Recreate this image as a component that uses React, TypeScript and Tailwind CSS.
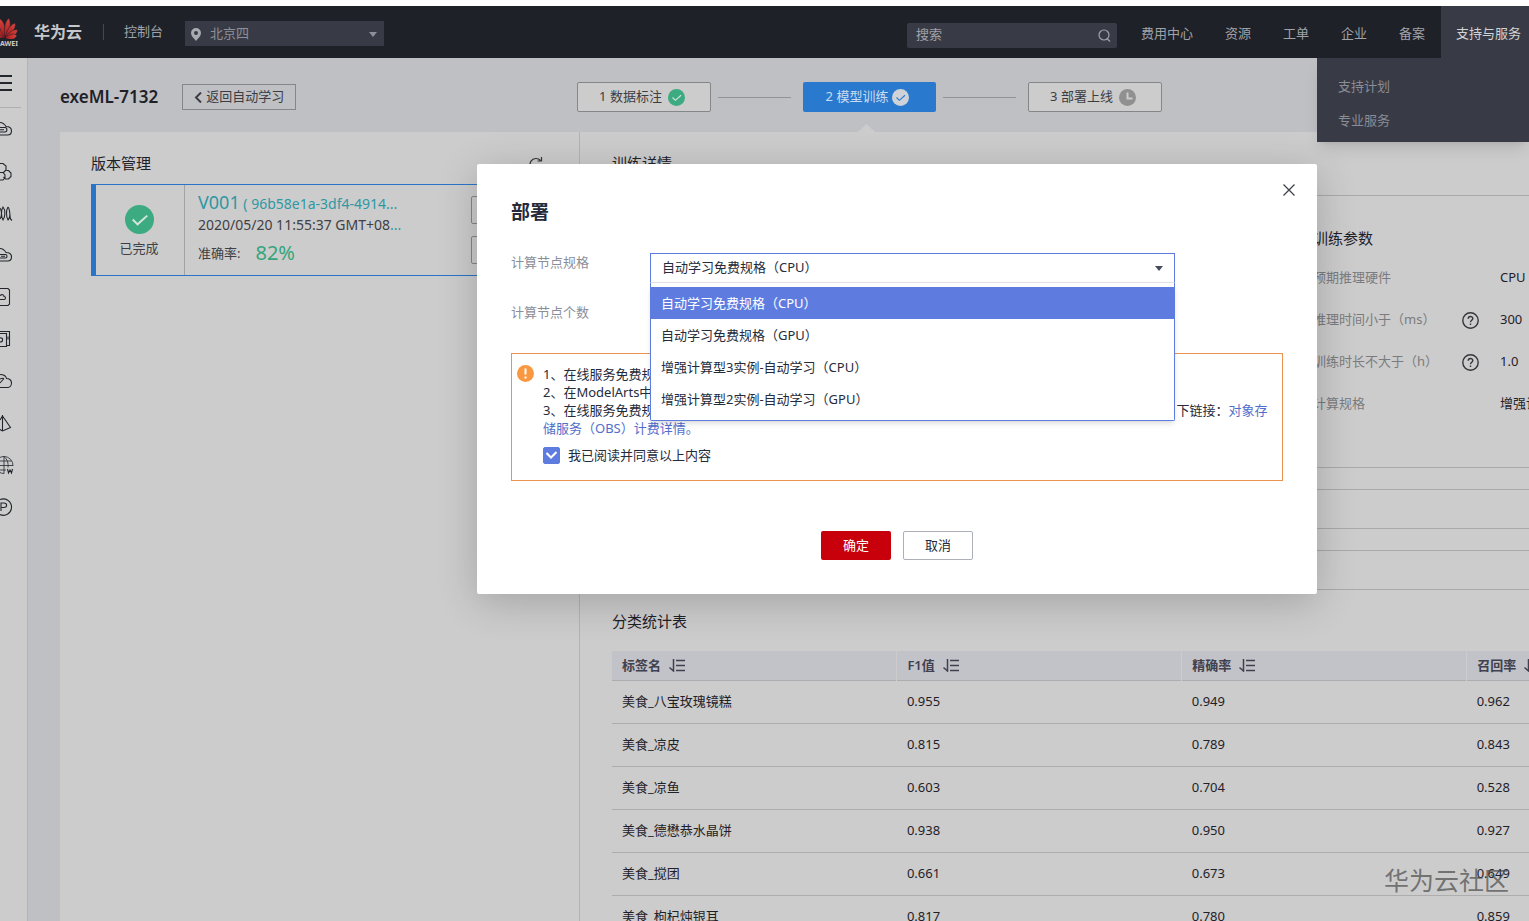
import type { ReactNode } from "react";
import { useState } from "react";

const menuItems = ["费用中心", "资源", "工单", "企业", "备案"];

const specs = [
  "自动学习免费规格（CPU）",
  "自动学习免费规格（GPU）",
  "增强计算型3实例-自动学习（CPU）",
  "增强计算型2实例-自动学习（GPU）",
];

const rows = [
  ["美食_八宝玫瑰镜糕", "0.955", "0.949", "0.962"],
  ["美食_凉皮", "0.815", "0.789", "0.843"],
  ["美食_凉鱼", "0.603", "0.704", "0.528"],
  ["美食_德懋恭水晶饼", "0.938", "0.950", "0.927"],
  ["美食_搅团", "0.661", "0.673", "0.649"],
  ["美食_枸杞炖银耳", "0.817", "0.780", "0.859"],
];

const params = [
  { label: "预期推理硬件", value: "CPU", help: false },
  { label: "推理时间小于（ms）", value: "300", help: true },
  { label: "训练时长不大于（h）", value: "1.0", help: true },
  { label: "计算规格", value: "增强计算型", help: false },
];

function Petal({ angle, length }: { angle: number; length: number }) {
  return (
    <path
      d={`M5 21 C1 ${21 - length * 0.45} 1 ${21 - length * 0.85} 4 ${21 - length} C8 ${21 - length * 0.8} 8 ${21 - length * 0.4} 5 21Z`}
      transform={`rotate(${angle} 5 21)`}
    />
  );
}

function Logo() {
  return (
    <a href="#" aria-label="HUAWEI" className="flex w-[18px] flex-col items-end overflow-hidden">
      <svg width="18" height="22" viewBox="0 0 18 22">
        <defs>
          <linearGradient id="petals" x1="0" y1="0" x2="0" y2="1">
            <stop offset="0" stopColor="#d6473f" />
            <stop offset="1" stopColor="#a3151b" />
          </linearGradient>
        </defs>
        <g fill="url(#petals)" stroke="#1e2128" strokeWidth="0.5">
          <Petal angle={-62} length={14} />
          <Petal angle={-36} length={18} />
          <Petal angle={-12} length={20} />
          <Petal angle={14} length={20} />
          <Petal angle={38} length={18} />
          <Petal angle={62} length={15} />
          <Petal angle={84} length={12} />
        </g>
      </svg>
      <span className="text-[7px] font-bold leading-[9px] text-[#c9c9c9]">HUAWEI</span>
    </a>
  );
}

function Caret({ className }: { className: string }) {
  return (
    <svg className={className} width="8" height="5" viewBox="0 0 8 5" fill="currentColor">
      <path d="M0 0h8L4 5z" />
    </svg>
  );
}

function CheckCircle({ size, fill, stroke }: { size: number; fill: string; stroke: string }) {
  return (
    <svg width={size} height={size} viewBox="0 0 30 30" fill="none" className="shrink-0">
      <circle cx="15" cy="15" r="15" fill={fill} />
      <path d="M8 15l5 5 10-9" stroke={stroke} strokeWidth="2" />
    </svg>
  );
}

function Clock() {
  return (
    <svg width="17" height="17" viewBox="0 0 17 17" fill="none" className="shrink-0">
      <circle cx="8.5" cy="8.5" r="8.5" fill="#909090" />
      <path d="M8.5 3.5v6h5" stroke="#cccccc" strokeWidth="2" />
    </svg>
  );
}

function SortIcon() {
  return (
    <svg width="16" height="13" viewBox="0 0 16 13" fill="none" stroke="currentColor" strokeWidth="1.5">
      <path d="M4.5 0v12L0.5 8.5M7 1.5h9M7 6.5h9M7 11.5h9" />
    </svg>
  );
}

function HelpIcon() {
  return (
    <svg width="17" height="17" viewBox="0 0 17 17" fill="none" stroke="#35363c" strokeWidth="1.4">
      <circle cx="8.5" cy="8.5" r="7.7" />
      <path d="M6.2 6.8c0-3 4.6-2.9 4.6-.2 0 1.7-2.3 1.7-2.3 3.6M8.5 11.4v1.5" />
    </svg>
  );
}

const railIcons: { name: string; art: ReactNode }[] = [
  {
    name: "云服务器",
    art: <path d="M0 3.500c3 0 4.500 1.500 6 4 3 0 5.500 1.500 5.500 4.500s-2 4-4 4H0M0 8.500h5c2.500 0 2.500 4.500 0 4.500H0M0 10.800h4" />,
  },
  {
    name: "弹性伸缩",
    art: <path d="M0 2.500h3l3 2.500v4l-2.500 2.500M0 11.500h3l2 2.500v2.500L3 19H0M6.500 9.500h2l2.500 2.500v3.500L8.500 18h-3L3.500 16" />,
  },
  {
    name: "云监控",
    art: <path d="M0 5c2 3 2 8 0 11M3 4c2.500 3 2.500 9 0 13-2-3-2-10 0-13zM8 4c2.500 3 1.500 9 2.500 12l1.500 1.500M8 4c-2 3-2 10 0 13 1.500-1.500 2-3 2-6" />,
  },
  {
    name: "裸金属",
    art: <path d="M0 3.500c3 0 4.500 1.500 6 4 3 0 5.500 1.500 5.500 4.500s-2 4-4 4H0M0 9.500h5.500c2 0 2 3.500 0 3.500H0M1 11.300h4" />,
  },
  {
    name: "镜像",
    art: <path d="M0 1.500h8l1.500 1.500v14L8 18.500H0M0 8.500c3-2 4 0 4 1 2 0 2 3 0 3H0" />,
  },
  {
    name: "云硬盘",
    art: <path d="M0 2.500h9.500v14h-3M0 4.500h6.500v13H0M0 9c3.500-1 3.500 4 0 4M8 7.500v3" />,
  },
  {
    name: "对象存储",
    art: <path d="M0 3.500c4 0 6 1.500 6.500 4 3 0 5 1.800 5 4.500s-2 4.500-4 4.500H0M0 8c2-1 3-1 4-.5M0 12l4-4.500" />,
  },
  {
    name: "弹性公网",
    art: <path d="M2.500 2v16M2.500 3l8 11.500-8 3.500L0 16.500M2.500 3 0 7M1 4.500h3" />,
  },
  {
    name: "域名",
    art: (
      <>
        <path
          d="M4 1.500a9 9 0 0 1 9 9.500M4 1.500v17M0 6h11.500M0 10.500h13M0 15h6M4 18.500c-1.500 0-3-.3-4-1M4 1.500c-1.500 0-3 .3-4 1M4 1.500c3.500 3 4.500 7 4 11"
          strokeWidth="0.8"
        />
        <path d="M7.500 14l1 4 1.500-3 1.500 3 1-4" />
      </>
    ),
  },
  {
    name: "备案管理",
    art: <path d="M0 2.600a8.200 8.200 0 1 1 0 15M1 14V6h3c3.500 0 3.500 4.500 0 4.500H1" />,
  },
];

function SideRail() {
  return (
    <nav className="w-7 shrink-0 border-r border-[#b3b4b7] bg-[#cccccc] text-[#24262d]">
      <div className="mr-1.5 flex h-[50px] items-center border-b border-[#b0b0b0]">
        <button type="button" aria-label="菜单">
          <svg width="12" height="18" viewBox="0 0 12 18" stroke="currentColor" strokeWidth="2">
            <path d="M0 2h12M0 9h12M0 16h12" />
          </svg>
        </button>
      </div>
      {railIcons.map((icon) => (
        <a key={icon.name} href="#" aria-label={icon.name} className="flex h-[42px] items-center">
          <svg width="14" height="20" viewBox="0 0 14 20" fill="none" stroke="currentColor" strokeWidth="1.1">
            {icon.art}
          </svg>
        </a>
      ))}
    </nav>
  );
}

function TopBar() {
  return (
    <header className="relative flex h-[52px] items-center bg-[#1e2128] text-[13px] text-[#a0a2a8]">
      <Logo />
      <span className="ml-4 text-base font-bold text-[#c6c7ca]">华为云</span>
      <span className="ml-[21px] h-4 w-px bg-[#444750]" />
      <a href="#" className="ml-5">控制台</a>
      <div className="relative ml-[22px] mt-[3px] text-[#8e9099]">
        <svg className="pointer-events-none absolute left-1.5 top-[7px]" width="10" height="13" viewBox="0 0 10 13" fill="#a9abb2">
          <path fillRule="evenodd" d="M5 0a5 5 0 0 1 5 5c0 3-3 5.500-5 8C3 10.500 0 8 0 5a5 5 0 0 1 5-5zm0 3a2 2 0 1 0 0 4 2 2 0 0 0 0-4z" />
        </svg>
        <select aria-label="区域" className="block h-[25px] w-[199px] appearance-none bg-[#383b45] pl-[25px]">
          <option>北京四</option>
        </select>
        <Caret className="pointer-events-none absolute right-[7px] top-[11px]" />
      </div>
      <div className="ml-auto mt-1.5 flex h-[25px] w-[210px] items-center rounded-xs bg-[#383b45] pl-[9px] pr-1.5">
        <input
          type="search"
          aria-label="搜索"
          placeholder="搜索"
          className="min-w-0 flex-1 bg-transparent placeholder:text-[#a0a2a8]"
        />
        <svg width="13" height="13" viewBox="0 0 13 13" fill="none" stroke="currentColor" strokeWidth="1.2">
          <circle cx="6" cy="6" r="5" />
          <path d="M9 9.500l3 3" />
        </svg>
      </div>
      <nav className="flex h-full pl-2 text-center">
        {menuItems.map((item) => (
          <a key={item} href="#" className="flex h-full items-center px-4 pt-1">
            {item}
          </a>
        ))}
        <a href="#" className="flex h-full items-center bg-[#383b45] pl-[15px] pr-2 pt-1 text-[#d2d3d6]">
          支持与服务
        </a>
      </nav>
      <div className="absolute right-0 top-full z-10 flex w-[212px] flex-col bg-[#383b45] pb-[5px] pl-[21px] pt-[11px] text-[#8a8c96] shadow-lg">
        <a href="#" className="leading-[34px]">支持计划</a>
        <a href="#" className="leading-[34px]">专业服务</a>
      </div>
    </header>
  );
}

function Steps() {
  return (
    <ol className="flex items-center text-[13px] text-[#3c3d42]">
      <li className="flex h-[30px] w-[134px] items-center justify-center gap-1.5 rounded-xs border border-[#85868a] bg-[#cccccc] pr-1">
        1 数据标注
        <CheckCircle size={17} fill="#3dab82" stroke="#d6e6df" />
      </li>
      <li aria-hidden className="ml-[7px] mr-3 h-px w-[73px] bg-[#929397]" />
      <li className="relative flex h-[30px] w-[133px] items-center justify-center gap-1 rounded-xs bg-[#2979cf] pr-1 text-[#c9dcf0]">
        2 模型训练
        <CheckCircle size={17} fill="#cfd3d8" stroke="#2979cf" />
        <svg className="absolute left-1/2 top-[42px] -ml-3" width="17" height="8" viewBox="0 0 17 8">
          <path d="M0 8L8.500 0 17 8z" fill="#cccccc" />
        </svg>
      </li>
      <li aria-hidden className="ml-[7px] mr-3 h-px w-[73px] bg-[#929397]" />
      <li className="flex h-[30px] w-[134px] items-center justify-center gap-1.5 rounded-xs border border-[#85868a] bg-[#cccccc] pr-1">
        3 部署上线
        <Clock />
      </li>
    </ol>
  );
}

function Versions() {
  return (
    <section className="w-[520px] shrink-0 border-r border-[#b3b3b3] px-[31px]">
      <div className="flex h-[52px] items-end justify-between pb-2 pr-[5px]">
        <h2 className="text-[15px] leading-[26px] text-[#1f2129]">版本管理</h2>
        <button type="button" aria-label="刷新" className="mb-[5px]">
          <svg width="14" height="14" viewBox="0 0 14 14" fill="none" stroke="#35363c" strokeWidth="1.2">
            <path d="M11.500 3.500A6 6 0 1 0 13 8M12.500 0v4h-4" />
          </svg>
        </button>
      </div>
      <article className="flex h-[92px] border border-l-[5px] border-[#2a74c8]">
        <div className="flex w-[89px] shrink-0 flex-col items-center border-r border-[#a3a3a3] pr-0.5 pt-5 text-[13px] leading-5 text-[#3f4045]">
          <CheckCircle size={29} fill="#3dab82" stroke="#d6e6df" />
          <span className="mt-1">已完成</span>
        </div>
        <div className="flex-1 whitespace-nowrap pl-[13px] pt-1.5 text-sm text-[#3f4045]">
          <h3 className="leading-[22px] text-[#2e98a3]">
            <a href="#">
              <span className="text-lg leading-[22px]">V001</span> ( 96b58e1a-3df4-4914...
            </a>
          </h3>
          <p className="leading-5">
            2020/05/20 11:55:37 GMT+08<span className="text-[#2e98a3]">...</span>
          </p>
          <p className="mt-[5px] flex items-center leading-[26px]">
            <span className="text-[13px]">准确率:</span>
            <span className="ml-[15px] text-xl leading-[26px] text-[#35a47b]">82%</span>
          </p>
        </div>
        <div className="flex flex-col gap-3 pr-2.5 pt-[11px]">
          <button type="button" aria-label="部署" className="h-7 w-[66px] rounded-xs border border-[#85868a]" />
          <button type="button" aria-label="发布" className="h-7 w-[66px] rounded-xs border border-[#85868a]" />
        </div>
      </article>
    </section>
  );
}

function Details() {
  return (
    <section className="min-w-0 flex-1 px-8 text-[#1f2129]">
      <h2 className="border-b border-[#a9a9a9] pb-[19px] pt-[18px] text-[15px] leading-[26px]">训练详情</h2>
      <div className="flex h-[272px] justify-end border-b border-[#a9a9a9] pt-[29px]">
        <div className="w-[449px]">
          <h2 className="text-[15px] leading-[26px]">训练参数</h2>
          <dl className="mt-1.5 text-[13px]">
            {params.map((param) => (
              <div key={param.label} className="grid h-[42px] grid-cols-[149px_38px_1fr] items-center">
                <dt className="text-[#7b7b7e]">{param.label}</dt>
                <dd>{param.help && <HelpIcon />}</dd>
                <dd>{param.value}</dd>
              </div>
            ))}
          </dl>
        </div>
      </div>
      <div className="mt-[21px] h-10 border-y border-[#a9a9a9]" />
      <div className="mt-[21px] h-10 border-y border-[#a9a9a9]" />
      <h2 className="mt-[18px] text-[15px] leading-[26px]">分类统计表</h2>
      <table className="mt-[17px] w-[1140px] table-fixed text-left text-[13px]">
        <thead>
          <tr className="h-[29px] border-b border-[#adadb1] bg-[#c2c2c9] text-[#40414f]">
            {["标签名", "F1值", "精确率", "召回率"].map((name) => (
              <th key={name} className="border-r border-[#cccccc] px-2.5 font-semibold">
                <span className="flex items-center gap-2">
                  {name}
                  <SortIcon />
                </span>
              </th>
            ))}
          </tr>
        </thead>
        <tbody>
          {rows.map((row) => (
            <tr key={row[0]} className="h-[43px] border-b border-[#adadad]">
              {row.map((cell, i) => (
                <td key={i} className="px-2.5">
                  {cell}
                </td>
              ))}
            </tr>
          ))}
        </tbody>
      </table>
    </section>
  );
}

function DeployDialog() {
  const [spec, setSpec] = useState(specs[0]);
  const [agreed, setAgreed] = useState(true);

  return (
    <div
      role="dialog"
      aria-labelledby="deploy-title"
      className="relative w-[840px] rounded-xs bg-white px-[34px] pb-[34px] pt-[34px] text-[13px] text-[#252b3a] shadow-[0_8px_40px_rgba(0,0,0,0.2)]"
    >
      <button type="button" aria-label="关闭" className="absolute right-[22px] top-5">
        <svg width="12" height="12" viewBox="0 0 12 12" stroke="#40424a" strokeWidth="1.3">
          <path d="M.5.5l11 11M11.500.5l-11 11" />
        </svg>
      </button>
      <h1 id="deploy-title" className="text-[19px] font-bold leading-7">部署</h1>
      <div className="mt-[27px] flex items-start">
        <label htmlFor="spec" className="w-[139px] leading-[18px] text-[#8a8e99]">
          计算节点规格
        </label>
        <div className="relative">
          <select
            id="spec"
            value={spec}
            onChange={(e) => setSpec(e.target.value)}
            className="block h-[30px] w-[525px] appearance-none border border-[#5e7ce0] border-b-[#dfe1e6] bg-white pl-[11px]"
          >
            {specs.map((name) => (
              <option key={name}>{name}</option>
            ))}
          </select>
          <Caret className="pointer-events-none absolute right-3 top-[13px] text-[#464c59]" />
          <ul className="absolute inset-x-0 top-full z-10 rounded-b-xs border border-t-0 border-[#5e7ce0] bg-white pb-[5px] pt-1 shadow-md">
            {specs.map((name) => (
              <li key={name}>
                <button
                  type="button"
                  onClick={() => setSpec(name)}
                  className={
                    name === spec
                      ? "block w-full bg-[#5e7ce0] pl-2.5 text-left leading-8 text-white"
                      : "block w-full pl-2.5 text-left leading-8"
                  }
                >
                  {name}
                </button>
              </li>
            ))}
          </ul>
        </div>
      </div>
      <p className="mt-5 leading-[18px] text-[#8a8e99]">计算节点个数</p>
      <div className="mt-8 flex border border-[#ea9250] pb-4 pl-[5px] pr-3 pt-[11px] leading-[18px]">
        <svg width="17" height="17" viewBox="0 0 17 17" className="shrink-0">
          <circle cx="8.500" cy="8.500" r="8.500" fill="#fa9841" />
          <path d="M8.500 3.500v6M8.500 11.500v2" stroke="#fff" strokeWidth="2" />
        </svg>
        <div className="ml-[9px] flex-1">
          <p>1、在线服务免费规</p>
          <p>2、在ModelArts中</p>
          <p>
            3、在线服务免费规
            <span className="inline-block w-[522px]" />
            下链接：
            <a href="#" className="text-[#526ecc]">对象存储服务（OBS）计费详情。</a>
          </p>
          <label className="mt-[9px] flex items-center">
            <input
              type="checkbox"
              checked={agreed}
              onChange={(e) => setAgreed(e.target.checked)}
              className="peer sr-only"
            />
            <span className="flex size-[17px] items-center justify-center rounded-xs border border-[#5e7ce0] text-transparent peer-checked:bg-[#5e7ce0] peer-checked:text-white">
              <svg width="11" height="8" viewBox="0 0 11 8" fill="none" stroke="currentColor" strokeWidth="2">
                <path d="M.5 2l4.500 4.500L10.500 1" />
              </svg>
            </span>
            <span className="ml-2">我已阅读并同意以上内容</span>
          </label>
        </div>
      </div>
      <div className="mt-[50px] flex justify-center gap-3">
        <button type="button" className="h-[29px] w-[70px] rounded-xs bg-[#c7000b] text-white">确定</button>
        <button type="button" className="h-[29px] w-[70px] rounded-xs border border-[#adb0b8]">取消</button>
      </div>
    </div>
  );
}

export default function App() {
  return (
    <div className="relative flex h-screen flex-col overflow-hidden border-t-[6px] border-white bg-[#bfc0c4] font-['Noto_Sans','Noto_Sans_CJK_SC',sans-serif]">
      <TopBar />
      <div className="flex min-h-0 min-w-[1794px] flex-1">
        <SideRail />
        <main className="flex min-w-0 flex-1 flex-col pl-8">
          <div className="flex h-[74px] shrink-0 items-center pt-1">
            <div className="flex w-[517px] items-center">
              <h1 className="text-[17px] font-semibold leading-6 text-[#1f2129]">exeML-7132</h1>
              <a
                href="#"
                className="ml-6 flex h-[26px] items-center gap-1 border border-[#85868a] px-[11px] text-[13px] text-[#3c3d42]"
              >
                <svg width="8" height="11" viewBox="0 0 8 11" fill="none" stroke="currentColor" strokeWidth="2">
                  <path d="M7 .5l-5 5 5 5" />
                </svg>
                返回自动学习
              </a>
            </div>
            <Steps />
          </div>
          <div className="flex flex-1 bg-[#cccccc]">
            <Versions />
            <Details />
          </div>
        </main>
      </div>
      <div className="absolute left-0 top-[158px] flex w-full min-w-[1794px] justify-center">
        <DeployDialog />
      </div>
      <p className="pointer-events-none absolute bottom-[21px] right-5 text-[25px] leading-10 text-[#4a4a4a]/70">华为云社区</p>
    </div>
  );
}
